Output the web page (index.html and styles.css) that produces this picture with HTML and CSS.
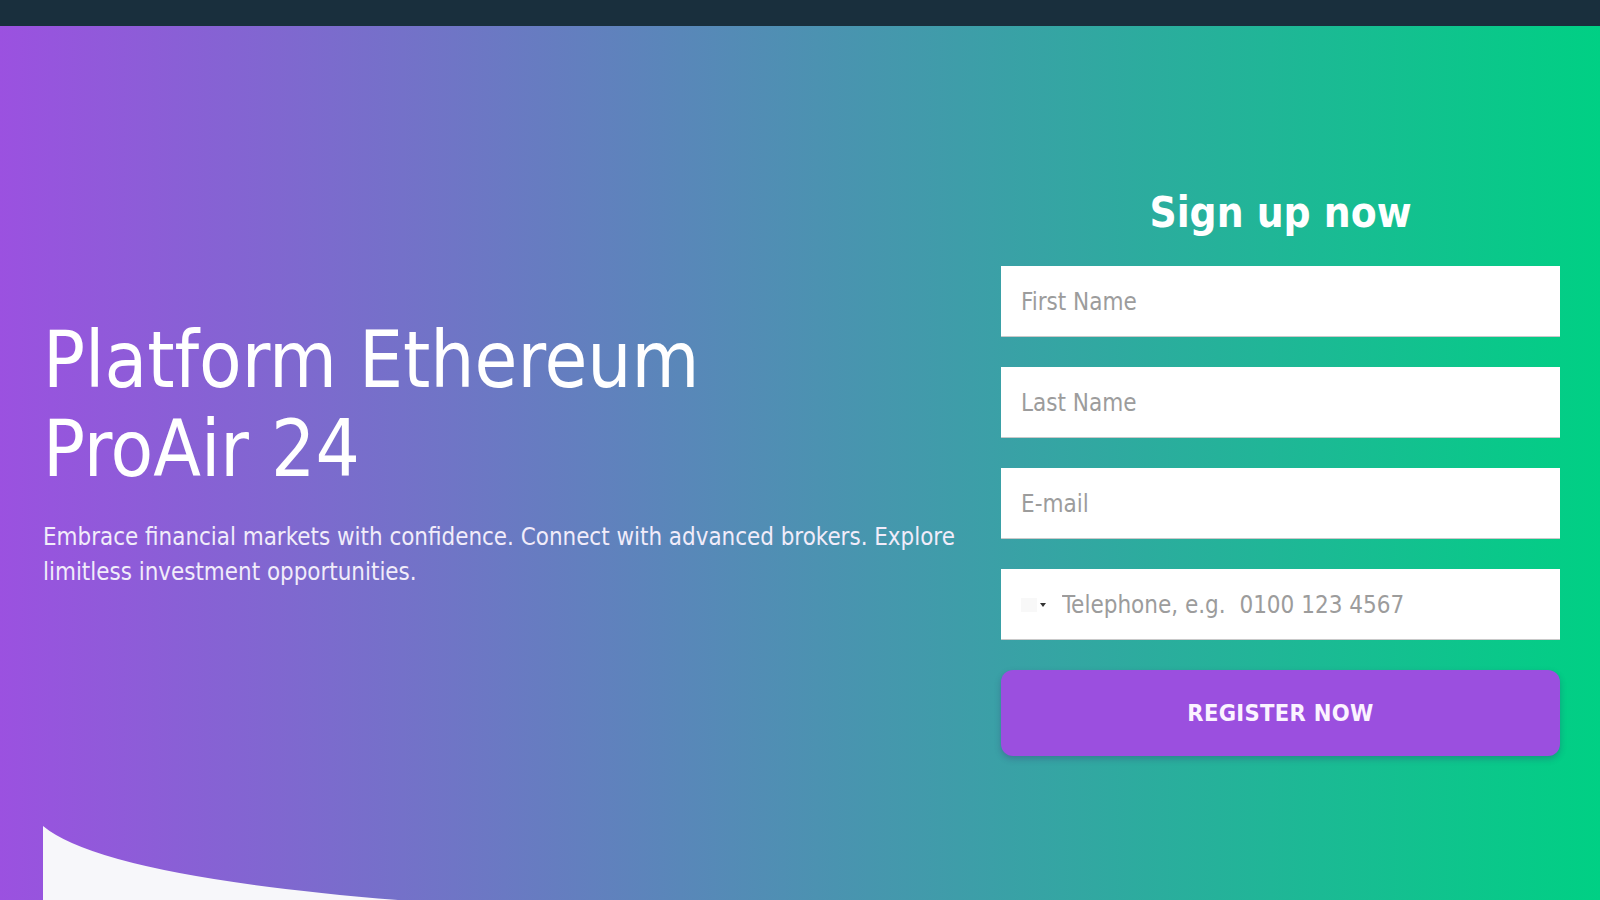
FILE: index.html
```html
<!DOCTYPE html>
<html lang="en">
<head>
<meta charset="UTF-8">
<meta name="viewport" content="width=device-width, initial-scale=1.0">
<title>Platform Ethereum ProAir 24</title>
<link rel="stylesheet" href="styles.css">
</head>
<body>

<div class="topbar"></div>

<section class="hero">
  <div class="hero-inner">
    <div class="hero-text">
      <h1>Platform Ethereum<br>ProAir 24</h1>
      <p>Embrace financial markets with confidence. Connect with advanced brokers. Explore limitless investment opportunities.</p>
    </div>

    <form class="signup" onsubmit="return false;">
      <h2>Sign up now</h2>
      <input type="text" class="field" placeholder="First Name">
      <input type="text" class="field" placeholder="Last Name">
      <input type="email" class="field" placeholder="E-mail">
      <div class="field phone">
        <span class="flag"></span>
        <span class="caret"></span>
        <input type="tel" placeholder="Telephone, e.g.  0100 123 4567">
      </div>
      <button type="submit">REGISTER NOW</button>
    </form>
  </div>

  <svg class="curve" width="600" height="74" viewBox="0 0 600 74">
    <path d="M0 0 Q 60 50 355 74 L 0 74 Z" fill="#f7f7fa"/>
  </svg>
</section>

</body>
</html>
```

FILE: styles.css
```css
body {
  margin: 0;
  padding: 0;
  font-family: "DejaVu Sans", sans-serif;
  font-stretch: condensed;
  background: #f7f7fa;
  overflow: hidden;
}
.topbar {
  height: 26px;
  background-color: #192f3d;
}
.hero {
  position: relative;
  height: 874px;
  background: linear-gradient(90deg, #9b51e0, #00d084);
  overflow: hidden;
}
.hero-inner {
  display: grid;
  grid-template-columns: 1fr 559px;
  gap: 41px;
  align-items: start;
  padding: 0 40px 0 43px;
}
.hero-text {
  padding-top: 290px;
  color: #fff;
}
.hero-text h1 {
  margin: 0 0 26px;
  font-size: 77.5px;
  font-weight: normal;
  line-height: 89px;
}
.hero-text p {
  margin: 0;
  font-size: 23.9px;
  line-height: 35px;
  color: #f1ecfa;
}
.signup {
  display: flex;
  flex-direction: column;
  gap: 30px;
  padding-top: 162px;
}
.signup h2 {
  margin: 0 0 -2px;
  text-align: center;
  font-size: 42px;
  line-height: 50px;
  color: #fff;
}
.field {
  box-sizing: border-box;
  height: 71px;
  width: 100%;
  margin: 0;
  padding: 2px 20px 0;
  border: none;
  border-bottom: 1px solid #c9c9c9;
  background: #fff;
  font-family: inherit;
  font-stretch: condensed;
  font-size: 24px;
  color: #333;
  outline: none;
}
.field::placeholder,
.phone input::placeholder {
  color: #9c9c9c;
}
.phone {
  display: flex;
  align-items: center;
}
.flag {
  width: 16px;
  height: 14px;
  background: #f8f8f8;
}
.caret {
  width: 0;
  height: 0;
  margin: 0 16px 0 3px;
  border-left: 3.5px solid transparent;
  border-right: 3.5px solid transparent;
  border-top: 4.5px solid #333;
}
.phone input {
  flex: 1;
  border: none;
  padding: 0;
  background: transparent;
  font-family: inherit;
  font-stretch: condensed;
  font-size: 24px;
  color: #333;
  outline: none;
}
.signup button {
  height: 86px;
  border: none;
  border-radius: 12px;
  background-color: #9b4fdf;
  box-shadow: 0 3px 6px rgba(60, 20, 100, 0.25);
  color: #fbf3ff;
  font-family: inherit;
  font-stretch: condensed;
  font-weight: bold;
  font-size: 23.5px;
  letter-spacing: 0.3px;
  cursor: pointer;
}
.curve {
  position: absolute;
  left: 43px;
  bottom: 0;
}
```
